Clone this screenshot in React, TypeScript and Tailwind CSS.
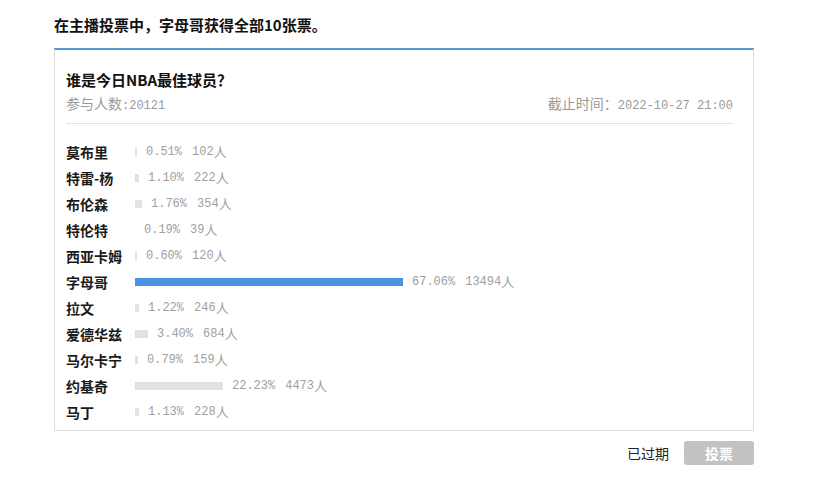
import React from "react";

const CJK = '"Noto Sans CJK SC", "Noto Sans", sans-serif';
const MONO = '"Liberation Mono", "Noto Sans CJK SC", monospace';

const rows: { name: string; pct: number; n: number }[] = [
  { name: "莫布里", pct: 0.51, n: 102 },
  { name: "特雷-杨", pct: 1.1, n: 222 },
  { name: "布伦森", pct: 1.76, n: 354 },
  { name: "特伦特", pct: 0.19, n: 39 },
  { name: "西亚卡姆", pct: 0.6, n: 120 },
  { name: "字母哥", pct: 67.06, n: 13494 },
  { name: "拉文", pct: 1.22, n: 246 },
  { name: "爱德华兹", pct: 3.4, n: 684 },
  { name: "马尔卡宁", pct: 0.79, n: 159 },
  { name: "约基奇", pct: 22.23, n: 4473 },
  { name: "马丁", pct: 1.13, n: 228 },
];

export default function App() {
  const max = Math.max(...rows.map((r) => r.pct));
  return (
    <div
      className="w-[813px] h-[495px] bg-white pl-[54px] pt-[15px]"
      style={{ fontFamily: CJK }}
    >
      <div className="text-[15px] leading-[20px] font-bold text-[#111]">
        在主播投票中，字母哥获得全部10张票。
      </div>
      <div className="mt-[13px] w-[700px] h-[383px] border border-[#dcdcdc] border-t-2 border-t-[#5b97cf] pl-[11px] pr-[20px] pt-[20px]">
        <div className="text-[15px] leading-[20px] font-bold text-[#111]">
          谁是今日NBA最佳球员？
        </div>
        <div className="mt-[3px] flex justify-between items-center text-[14px] leading-[20px] text-[#9a9a9a]">
          <div>
            参与人数<span style={{ fontFamily: MONO }} className="text-[12px]">:20121</span>
          </div>
          <div>
            截止时间：
            <span style={{ fontFamily: MONO }} className="text-[12px]">
              2022-10-27 21:00
            </span>
          </div>
        </div>
        <div className="mt-[7px] h-px bg-[#e3e3e3]" />
        <div className="mt-[15px] flex flex-col">
          {rows.map((r) => {
            const w = Math.floor(r.pct * 4);
            const top = r.pct === max;
            return (
              <div key={r.name} className="h-[26px] flex items-center">
                <div className="w-[69px] shrink-0 text-[14px] font-bold text-[#1a1a1a] whitespace-nowrap">
                  {r.name}
                </div>
                <div
                  className={top ? "h-[8px] bg-[#4a93e0]" : "h-[8px] bg-[#e2e2e2]"}
                  style={{ width: w }}
                />
                <div className="ml-[9px] text-[#a0a0a0] whitespace-nowrap flex items-center">
                  <span style={{ fontFamily: MONO }} className="text-[12px]">
                    {r.pct.toFixed(2)}%
                  </span>
                  <span style={{ fontFamily: MONO }} className="text-[12px] ml-[10px]">
                    {r.n}
                  </span>
                  <span className="text-[13px]">人</span>
                </div>
              </div>
            );
          })}
        </div>
      </div>
      <div className="w-[700px] mt-[10px] flex justify-end items-center">
        <span className="text-[14px] text-[#222] mr-[15px]">已过期</span>
        <button className="w-[70px] h-[24px] rounded-[3px] bg-[#c2c2c2] text-white text-[14px] font-bold leading-[24px]">
          投票
        </button>
      </div>
    </div>
  );
}
